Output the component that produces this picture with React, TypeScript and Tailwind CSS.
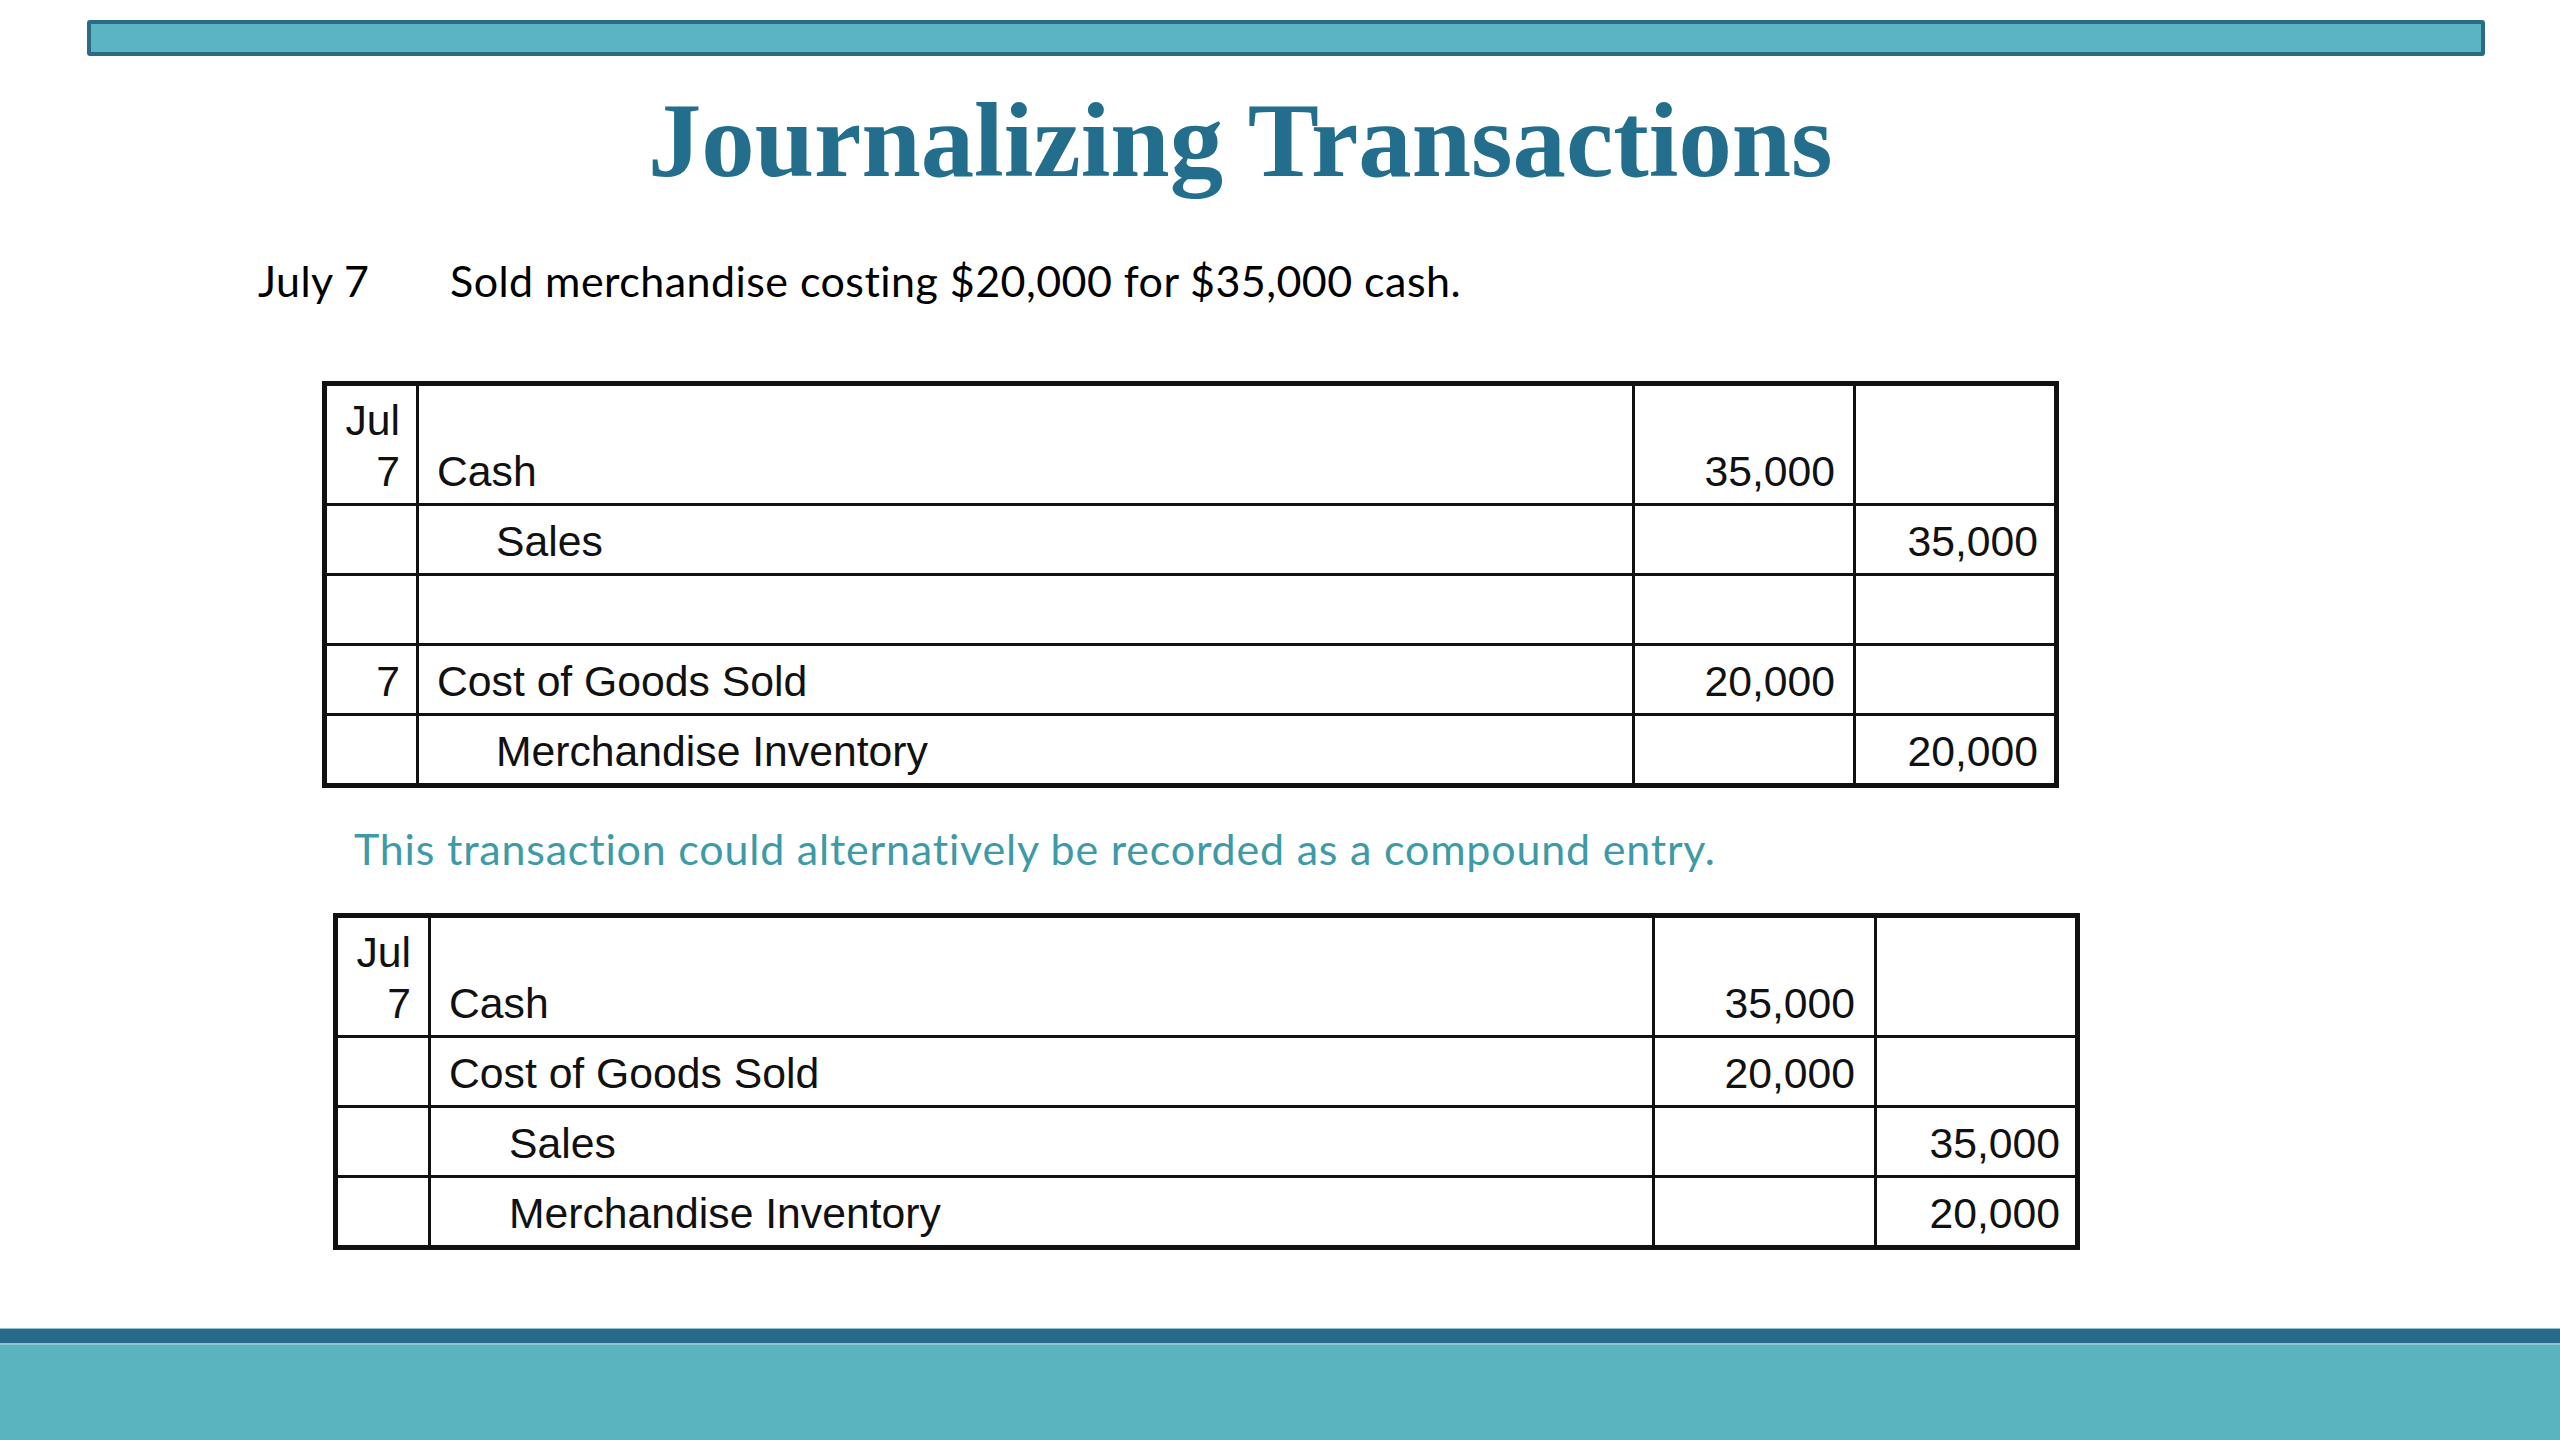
import React from "react";

type Row = {
  date?: string[];
  account: string;
  indent?: boolean;
  debit?: string;
  credit?: string;
  tall?: boolean;
};

const table1: Row[] = [
  { date: ["Jul", "7"], account: "Cash", debit: "35,000", tall: true },
  { account: "Sales", indent: true, credit: "35,000" },
  { account: "" },
  { date: ["7"], account: "Cost of Goods Sold", debit: "20,000" },
  { account: "Merchandise Inventory", indent: true, credit: "20,000" },
];

const table2: Row[] = [
  { date: ["Jul", "7"], account: "Cash", debit: "35,000", tall: true },
  { account: "Cost of Goods Sold", debit: "20,000" },
  { account: "Sales", indent: true, credit: "35,000" },
  { account: "Merchandise Inventory", indent: true, credit: "20,000" },
];

function Ledger({
  rows,
  widths,
  pads,
}: {
  rows: Row[];
  widths: { c1: string; c2: string; c3: string; outer: string; margin: string };
  pads: { date: string; acc: string; ind: string; deb: string; cred: string };
}) {
  return (
    <div
      className={`${widths.outer} ${widths.margin} border-[5px] border-[#111] flex flex-col text-[42.7px] leading-[51px] text-[#111]`}
      style={{ fontFamily: '"Liberation Sans", Arial, sans-serif' }}
    >
      {rows.map((r, i) => (
        <div
          key={i}
          className={`flex ${i > 0 ? "border-t-[3px] border-[#111]" : ""} ${
            r.tall ? "h-[117px]" : "h-[70px]"
          }`}
        >
          <div
            className={`${widths.c1} shrink-0 border-r-[3px] border-[#111] flex flex-col justify-end items-end ${pads.date} pb-[6px]`}
          >
            {r.date?.map((d, k) => (
              <div key={k}>{d}</div>
            ))}
          </div>
          <div
            className={`${widths.c2} shrink-0 border-r-[3px] border-[#111] flex items-end pb-[6px] ${
              r.indent ? pads.ind : pads.acc
            }`}
          >
            {r.account}
          </div>
          <div
            className={`${widths.c3} shrink-0 border-r-[3px] border-[#111] flex items-end justify-end pb-[6px] ${pads.deb}`}
          >
            {r.debit ?? ""}
          </div>
          <div className={`flex-1 flex items-end justify-end pb-[6px] ${pads.cred}`}>
            {r.credit ?? ""}
          </div>
        </div>
      ))}
    </div>
  );
}

export default function App() {
  return (
    <div className="w-[2560px] h-[1440px] bg-white flex flex-col overflow-hidden">
      {/* top bar */}
      <div className="mt-[20px] ml-[87px] w-[2398px] h-[36px] rounded-[3px] border-[4px] border-[#2b6b87] bg-[#5ab4c1]" />

      {/* title */}
      <div
        className="mt-[31px] ml-[648px] text-[106.7px] leading-none font-bold text-[#236e8c] whitespace-nowrap"
        style={{ fontFamily: '"Liberation Serif", "Times New Roman", serif' }}
      >
        Journalizing Transactions
      </div>

      {/* subtitle */}
      <div
        className="mt-[65px] flex text-[43px] leading-none tracking-[0.45px] text-black whitespace-nowrap [font-variant-ligatures:none]"
        style={{ fontFamily: 'Lato, "Noto Sans", sans-serif' }}
      >
        <span className="ml-[258px] w-[192px]">July 7</span>
        <span>Sold merchandise costing $20,000 for $35,000 cash.</span>
      </div>

      {/* table 1 */}
      <Ledger
        rows={table1}
        widths={{
          outer: "w-[1737px]",
          margin: "ml-[322px] mt-[79px]",
          c1: "w-[92px]",
          c2: "w-[1216px]",
          c3: "w-[221px]",
        }}
        pads={{
          date: "pr-[16px]",
          acc: "pl-[18px]",
          ind: "pl-[77px]",
          deb: "pr-[18px]",
          cred: "pr-[16px]",
        }}
      />

      {/* note */}
      <div
        className="mt-[39px] ml-[354px] text-[43px] leading-none tracking-[0.8px] text-[#3e9aa6] whitespace-nowrap [font-variant-ligatures:none]"
        style={{ fontFamily: 'Lato, "Noto Sans", sans-serif' }}
      >
        This transaction could alternatively be recorded as a compound entry.
      </div>

      {/* table 2 */}
      <Ledger
        rows={table2}
        widths={{
          outer: "w-[1747px]",
          margin: "ml-[333px] mt-[43px]",
          c1: "w-[93px]",
          c2: "w-[1224px]",
          c3: "w-[222px]",
        }}
        pads={{
          date: "pr-[17px]",
          acc: "pl-[18px]",
          ind: "pl-[78px]",
          deb: "pr-[19px]",
          cred: "pr-[15px]",
        }}
      />

      {/* bottom band */}
      <div className="mt-auto h-[112px] flex flex-col">
        <div className="h-[1px] bg-[#8cc6d3]" />
        <div className="h-[14px] bg-[#29698a]" />
        <div className="h-[2px] bg-[#8cc6d3]" />
        <div className="flex-1 bg-[#59b4c0]" />
      </div>
    </div>
  );
}
